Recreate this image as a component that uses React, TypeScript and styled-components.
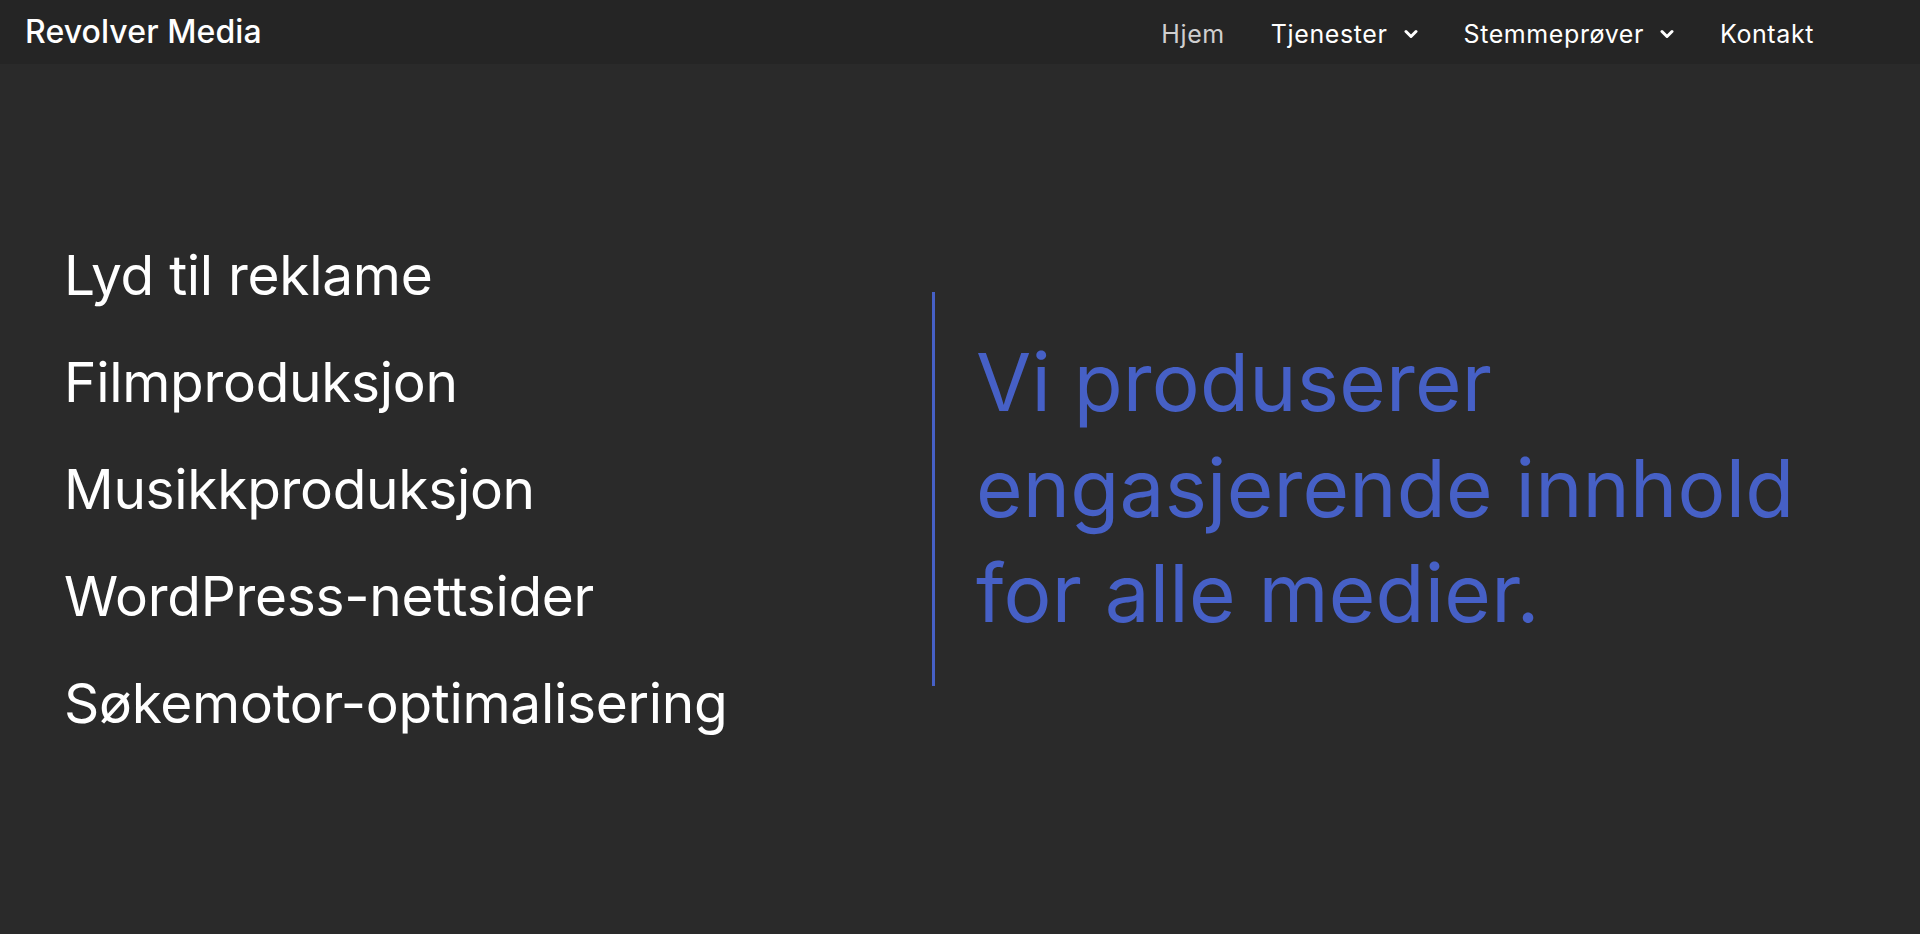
import React from "react";
import styled, { createGlobalStyle } from "styled-components";

const GlobalStyle = createGlobalStyle`
  html, body {
    margin: 0;
    padding: 0;
    background: #2a2a2a;
  }
  body {
    font-family: Inter, "Liberation Sans", sans-serif;
    color: #ffffff;
  }
  * { box-sizing: border-box; }
`;

const Page = styled.div`
  min-height: 934px;
  background: #2a2a2a;
  display: flex;
  flex-direction: column;
`;

const Header = styled.header`
  height: 64px;
  background: #252525;
  display: flex;
  align-items: center;
  justify-content: space-between;
  padding: 0 106px 0 25px;
`;

const Logo = styled.div`
  font-size: 32px;
  font-weight: 500;
  letter-spacing: 0.1px;
  color: #ffffff;
  padding-bottom: 2px;
`;

const Nav = styled.nav`
  display: flex;
  align-items: center;
  gap: 46px;
`;

const NavItem = styled.a<{ $active?: boolean }>`
  display: flex;
  align-items: center;
  gap: 16px;
  font-size: 25px;
  font-weight: 400;
  letter-spacing: 0.6px;
  color: ${(p) => (p.$active ? "#cfcfcf" : "#ffffff")};
  text-decoration: none;
  padding-top: 3px;
`;

const Chevron = styled.svg`
  width: 14px;
  height: 10px;
  display: block;
`;

const Main = styled.main`
  flex: 1;
  display: flex;
  align-items: center;
  padding: 0 0 20px 64px;
`;

const ServiceList = styled.ul`
  list-style: none;
  margin: 0;
  padding: 0;
  width: 868px;
`;

const ServiceItem = styled.li`
  font-size: 55px;
  line-height: 107px;
  font-weight: 400;
  letter-spacing: -0.3px;
  color: #ffffff;
  white-space: nowrap;
`;

const Statement = styled.div`
  border-left: 3px solid #4660c6;
  padding: 37px 0 40px 41px;
`;

const Headline = styled.h1`
  margin: 0;
  font-size: 80px;
  line-height: 105.5px;
  font-weight: 400;
  letter-spacing: 0.2px;
  color: #4660c6;
  white-space: nowrap;
`;

const ChevronIcon = () => (
  <Chevron viewBox="0 0 14 10" fill="none">
    <polyline
      points="2,2.5 7,7.5 12,2.5"
      stroke="#ffffff"
      strokeWidth="3"
      strokeLinecap="round"
      strokeLinejoin="round"
    />
  </Chevron>
);

const services = [
  "Lyd til reklame",
  "Filmproduksjon",
  "Musikkproduksjon",
  "WordPress-nettsider",
  "Søkemotor-optimalisering",
];

export default function App() {
  return (
    <>
      <GlobalStyle />
      <Page>
        <Header>
          <Logo>Revolver Media</Logo>
          <Nav>
            <NavItem $active>Hjem</NavItem>
            <NavItem>
              Tjenester <ChevronIcon />
            </NavItem>
            <NavItem>
              Stemmeprøver <ChevronIcon />
            </NavItem>
            <NavItem>Kontakt</NavItem>
          </Nav>
        </Header>
        <Main>
          <ServiceList>
            {services.map((s) => (
              <ServiceItem key={s}>{s}</ServiceItem>
            ))}
          </ServiceList>
          <Statement>
            <Headline>
              Vi produserer
              <br />
              engasjerende innhold
              <br />
              for alle medier.
            </Headline>
          </Statement>
        </Main>
      </Page>
    </>
  );
}
